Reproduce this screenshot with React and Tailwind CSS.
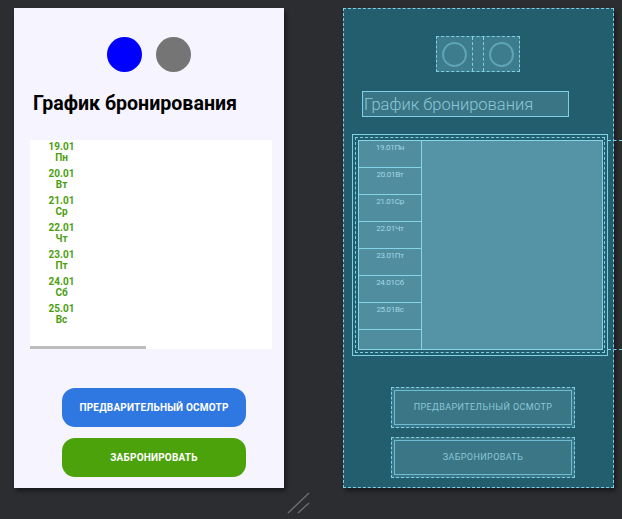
import React from 'react';

const days = [
  { date: '19.01', day: 'Пн' },
  { date: '20.01', day: 'Вт' },
  { date: '21.01', day: 'Ср' },
  { date: '22.01', day: 'Чт' },
  { date: '23.01', day: 'Пт' },
  { date: '24.01', day: 'Сб' },
  { date: '25.01', day: 'Вс' },
];

// design preview (left phone)
const Preview = () => (
  <div className="w-[270px] h-[480px] bg-[#f6f4fe] flex flex-col shadow-[2px_3px_4px_rgba(0,0,0,0.45)] font-['Roboto',sans-serif]">
    <div className="flex justify-center gap-[14px] pt-[29px]">
      <div className="w-[35px] h-[35px] rounded-full bg-[#0000ff]" />
      <div className="w-[35px] h-[35px] rounded-full bg-[#747574]" />
    </div>
    <h1 className="ml-[19px] mt-[19px] h-[26px] text-[19.6px] leading-[26px] font-bold text-black">
      График бронирования
    </h1>
    <div className="ml-[16px] mt-[23px] w-[242px] h-[209px] bg-white flex flex-col">
      <div className="flex-1">
        {days.map((d) => (
          <div key={d.date} className="w-[63px] h-[27px] pt-[1px] flex flex-col items-center text-[10px] leading-[11px] font-bold text-[#4c9e10]">
            <span>{d.date}</span>
            <span>{d.day}</span>
          </div>
        ))}
      </div>
      <div className="w-[116px] h-[3px] bg-[#bdbdbd]" />
    </div>
    <div className="ml-[48px] mt-[39px] flex flex-col gap-[11px]">
      <button className="w-[184px] h-[39px] rounded-[13px] bg-[#2f77e1] text-white text-[10px] font-bold tracking-[0.2px]">
        ПРЕДВАРИТЕЛЬНЫЙ ОСМОТР
      </button>
      <button className="w-[184px] h-[39px] rounded-[13px] bg-[#4ca20b] text-white text-[10px] font-bold tracking-[0.2px]">
        ЗАБРОНИРОВАТЬ
      </button>
    </div>
  </div>
);

const Ring = () => (
  <svg width="25" height="25" viewBox="0 0 25 25">
    <circle cx="12.5" cy="12.5" r="11.5" fill="none" stroke="#5ea4b6" strokeWidth="2" />
  </svg>
);

// blueprint view (right)
const Blueprint = () => (
  <div className="w-[271px] h-[480px] bg-[#235e6e] border border-dashed border-[#7fcfe3] flex flex-col shadow-[2px_3px_4px_rgba(0,0,0,0.45)] font-['Roboto',sans-serif]">
    <div className="ml-[92px] mt-[27px] flex h-[36px] w-[84px] border border-dashed border-[#7fd0e6] bg-[#3d7c8d]">
      <div className="w-[35px] flex items-center justify-center">
        <Ring />
      </div>
      <div className="w-[12px] border-x border-dashed border-[#7fd0e6]" />
      <div className="flex-1 flex items-center justify-center">
        <Ring />
      </div>
    </div>
    <div className="ml-[18px] mt-[19px] w-[207px] h-[26px] bg-[#3a7585] border border-[#7fd0e6] flex items-end">
      <span className="pl-[1px] text-[16.5px] leading-[22px] font-light text-[#8cc8d9]">График бронирования</span>
    </div>
    <div className="ml-[8px] mt-[17px] w-[256px] h-[222px] border border-[#7fd0e6] p-[2px]">
      <div className="h-full border border-dashed border-[#7fd0e6] p-[2px] pr-[1px]">
        <div className="h-full bg-[#5594a6] border border-[#86d4e8] flex">
          <div className="w-[63px] flex flex-col border-r border-[#86d4e8] bg-[#4f8d9f]">
            {days.map((d) => (
              <div key={d.date} className="h-[27px] border-b border-[#86d4e8] pt-[2px] text-center text-[8px] leading-[10px] text-[#a4d9e6] tracking-[-0.3px]">
                {d.date}{d.day}
              </div>
            ))}
            <div className="flex-1" />
          </div>
        </div>
      </div>
    </div>
    <div className="ml-[47px] mt-[31px] flex flex-col gap-[9px]">
      {['ПРЕДВАРИТЕЛЬНЫЙ ОСМОТР', 'ЗАБРОНИРОВАТЬ'].map((t) => (
        <div key={t} className="w-[184px] h-[41px] border border-dashed border-[#7fd0e6] p-[2px] bg-[#3a7686]">
          <div className="h-full border border-[#6cbdd3] flex items-center justify-center text-[9px] tracking-[0.4px] text-[#8cc8d9]">
            {t}
          </div>
        </div>
      ))}
    </div>
  </div>
);

export default function App() {
  return (
    <div className="relative w-[622px] h-[519px] bg-[#2b2d30] overflow-hidden">
      <div className="flex gap-[59px] pl-[14px] pt-[8px]">
        <Preview />
        <Blueprint />
      </div>
      {/* guide lines running off the blueprint */}
      <div className="absolute left-[608px] top-[140px] w-[14px] border-t border-dashed border-[#7fcfe3]" />
      <div className="absolute left-[608px] top-[349px] w-[14px] border-t border-dashed border-[#7fcfe3]" />
      {/* resize handle */}
      <svg className="absolute left-[286px] top-[491px]" width="26" height="24" viewBox="0 0 26 24">
        <line x1="2" y1="22" x2="23" y2="2" stroke="#6b6b6b" strokeWidth="1.5" />
        <line x1="12" y1="22" x2="23" y2="12" stroke="#6b6b6b" strokeWidth="1.5" />
      </svg>
    </div>
  );
}
